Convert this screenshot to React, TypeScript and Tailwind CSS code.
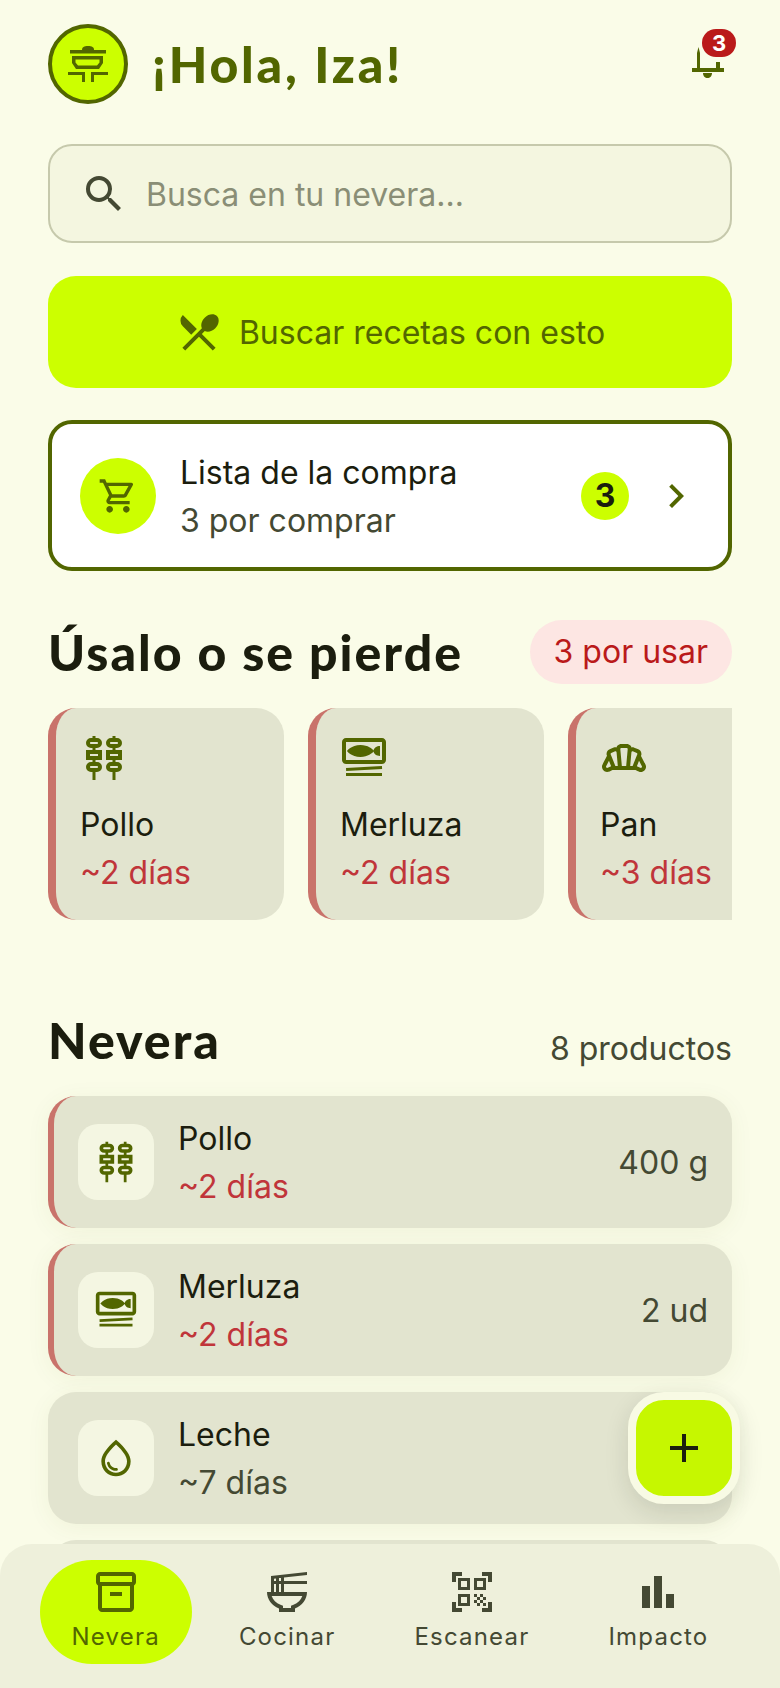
import {
  MdAdd,
  MdChevronRight,
  MdOutlineBakeryDining,
  MdOutlineInventory2,
  MdOutlineKebabDining,
  MdOutlineRamenDining,
  MdOutlineSetMeal,
  MdOutlineShoppingCart,
  MdOutlineWaterDrop,
  MdQrCodeScanner,
  MdRestaurantMenu,
  MdSearch,
} from 'react-icons/md';
import type { IconType } from 'react-icons';

const headFont = "font-['Lato',sans-serif]";

const BarsIcon: IconType = ({ size }) => (
  <svg width={size} height={size} viewBox="0 -960 960 960" fill="currentColor">
    <path d="M640-160v-280h160v280H640Zm-240 0v-640h160v640H400Zm-240 0v-440h160v440H160Z" />
  </svg>
);

const expiring: { name: string; days: string; icon: IconType }[] = [
  { name: 'Pollo', days: '~2 días', icon: MdOutlineKebabDining },
  { name: 'Merluza', days: '~2 días', icon: MdOutlineSetMeal },
  { name: 'Pan', days: '~3 días', icon: MdOutlineBakeryDining },
];

const fridge: { name: string; days: string; qty: string; icon: IconType; soon: boolean }[] = [
  { name: 'Pollo', days: '~2 días', qty: '400 g', icon: MdOutlineKebabDining, soon: true },
  { name: 'Merluza', days: '~2 días', qty: '2 ud', icon: MdOutlineSetMeal, soon: true },
  { name: 'Leche', days: '~7 días', qty: '', icon: MdOutlineWaterDrop, soon: false },
];

const tabs: { label: string; icon: IconType; active?: boolean }[] = [
  { label: 'Nevera', icon: MdOutlineInventory2, active: true },
  { label: 'Cocinar', icon: MdOutlineRamenDining },
  { label: 'Escanear', icon: MdQrCodeScanner },
  { label: 'Impacto', icon: BarsIcon },
];

const LogoIcon = () => (
  <svg width="40" height="40" viewBox="0 0 40 40" fill="#526600">
    <path d="M14 6c0-3 2-4 6-4s6 1 6 4z" />
    <path d="M2 6h36v3.500H2z" />
    <path fillRule="evenodd" d="M4 12h31v7l-4 6H8l-4-6zM7.500 15.500v3l2.500 3h19l2.500-3v-3z" />
    <path d="M0 28h17v10h-3v-7H0zM40 28H23v10h3v-7h14z" />
  </svg>
);

const BellIcon = () => (
  <svg width="32" height="40" viewBox="0 0 32 40" fill="#526600">
    <path d="M5 26V11l1.500-6L8 11v15z" />
    <path d="M0 26h32v4H0z" />
    <path d="M24 20h4v7h-4z" />
    <path d="M11 31h9c0 3-2 5-4.500 5S11 34 11 31z" />
  </svg>
);

export default function App() {
  return (
    <div className="relative h-[1688px] w-[780px] overflow-hidden bg-[#fafce8] font-['Inter',sans-serif] text-[#1b1d0e]">
      <div className="px-12 pt-6">
        <header className="flex h-20 items-center justify-between">
          <div className="flex items-center gap-6">
            <div className="flex size-20 items-center justify-center rounded-full border-4 border-[#526600] bg-[#ccff00]">
              <LogoIcon />
            </div>
            <h1 className={`${headFont} text-[50px] font-black tracking-[2.8px] text-[#526600]`}>¡Hola, Iza!</h1>
          </div>
          <div className="relative mr-2 -mt-1 h-10 w-8">
            <BellIcon />
            <span className="absolute left-[10px] -top-[13px] flex h-7 w-[34px] items-center justify-center rounded-full bg-[#ba1a1a] text-[22px] font-bold text-white">
              3
            </span>
          </div>
        </header>

        <div className="mt-10 flex h-[99px] items-center gap-[18px] rounded-3xl border-2 border-[#c6c9ac] bg-[#f4f6e0] pl-[30px]">
          <MdSearch size={48} className="text-[#444933]" />
          <span className="pt-[3px] text-[32px] text-[#8a8e76]">Busca en tu nevera...</span>
        </div>

        <div className="mt-[33px] flex h-28 items-center justify-center gap-4 rounded-[28px] bg-[#ccff00]">
          <MdRestaurantMenu size={48} className="text-[#526600]" />
          <span className="pt-[2px] text-[32px] text-[#526600]">Buscar recetas con esto</span>
        </div>

        <div className="mt-8 flex h-[151px] items-center rounded-3xl border-4 border-[#526600] bg-white pl-7 pr-[28px]">
          <div className="flex size-[76px] items-center justify-center rounded-full bg-[#ccff00]">
            <MdOutlineShoppingCart size={40} className="text-[#526600]" />
          </div>
          <div className="ml-6 flex-1 pt-[3px]">
            <div className="text-[32px] leading-[48px]">Lista de la compra</div>
            <div className="text-[32px] leading-[48px] text-[#444933]">3 por comprar</div>
          </div>
          <span className="flex size-12 items-center justify-center rounded-full bg-[#ccff00] text-[32px] font-bold">3</span>
          <MdChevronRight size={48} className="ml-[23px] text-[#526600]" />
        </div>

        <div className="mt-[49px] flex h-16 items-center justify-between">
          <h2 className={`${headFont} text-[50px] font-black tracking-[2px]`}>Úsalo o se pierde</h2>
          <span className="flex h-16 items-center rounded-full bg-[#fde6e3] px-6 text-[32px] text-[#ba1a1a]">3 por usar</span>
        </div>

        <div className="mt-6 flex gap-6 overflow-hidden">
          {expiring.map((item) => (
            <div key={item.name} className="h-[212px] w-[236px] shrink-0 rounded-[28px] border-l-8 border-[#c9736b] bg-[#e2e4cf] pl-6 pt-[26px]">
              <item.icon size={48} className="text-[#526600]" />
              <div className="mt-[19px] text-[32px] leading-[48px]">{item.name}</div>
              <div className="text-[32px] leading-[47px] text-[#c0353a]">{item.days}</div>
            </div>
          ))}
        </div>

        <div className="mt-[90px] flex h-[60px] items-center justify-between">
          <h2 className={`${headFont} text-[50px] font-black tracking-[2px]`}>Nevera</h2>
          <span className="mt-[18px] text-[32px] text-[#444933]">8 productos</span>
        </div>

        <div className="mt-[26px] flex flex-col gap-4">
          {fridge.map((item) => (
            <div
              key={item.name}
              className={`flex h-[132px] items-center rounded-[28px] bg-[#e2e4cf] pr-6 shadow-[0_4px_24px_rgba(82,102,0,0.06)] ${
                item.soon ? 'border-l-[6px] border-[#c9736b] pl-6' : 'pl-[30px]'
              }`}
            >
              <div className="flex size-[76px] items-center justify-center rounded-[20px] bg-[#f4f6e2]">
                <item.icon size={44} className="text-[#526600]" />
              </div>
              <div className="ml-6 flex-1 pt-[2px]">
                <div className="text-[32px] leading-[48px]">{item.name}</div>
                <div className={`text-[32px] leading-[48px] ${item.soon ? 'text-[#c0353a]' : 'text-[#444933]'}`}>{item.days}</div>
              </div>
              <span className="pt-[2px] text-[32px] text-[#444933]">{item.qty}</span>
            </div>
          ))}
          <div className="h-[132px] rounded-[28px] bg-[#e2e4cf]" />
        </div>
      </div>

      <button className="absolute left-[628px] top-[1392px] flex size-28 items-center justify-center rounded-[36px] border-8 border-[#f8fae4] bg-[#c6f700] shadow-[0_8px_24px_rgba(27,29,14,0.12)]">
        <MdAdd size={48} className="text-[#1b1d0e]" />
      </button>

      <nav className="absolute bottom-0 left-0 flex h-36 w-full justify-center gap-[15px] rounded-t-[32px] bg-[#eef0db] pt-4">
        {tabs.map((tab) => (
          <div
            key={tab.label}
            className={`flex h-[104px] flex-col items-center rounded-full px-8 pt-2 ${
              tab.active ? 'bg-[#ccff00] text-[#526600]' : 'text-[#444933]'
            }`}
          >
            <tab.icon size={48} />
            <span className="mt-[5px] text-[24px] leading-8 tracking-[1.2px]">{tab.label}</span>
          </div>
        ))}
      </nav>
    </div>
  );
}
